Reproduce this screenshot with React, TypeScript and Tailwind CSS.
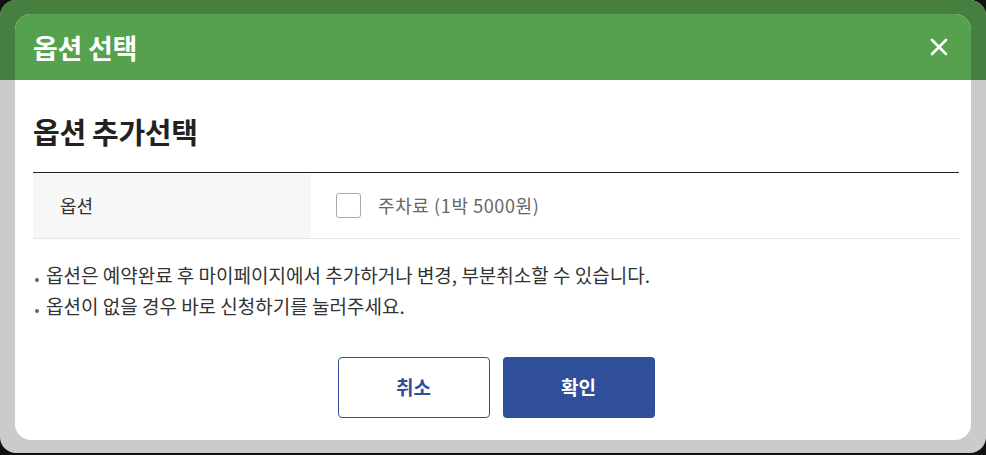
import { useState } from "react";

const notes = [
  "옵션은 예약완료 후 마이페이지에서 추가하거나 변경, 부분취소할 수 있습니다.",
  "옵션이 없을 경우 바로 신청하기를 눌러주세요.",
];

export default function App() {
  const [parking, setParking] = useState(false);

  return (
    <div
      className="w-[986px] h-[455px] bg-[#111] overflow-hidden"
      style={{ fontFamily: '"Noto Sans CJK KR", "Noto Sans", sans-serif' }}
    >
      {/* dimmed page behind the dialog */}
      <div className="relative w-full h-[453px] rounded-[16px] bg-[#cbcbcb] overflow-hidden">
        <div className="h-[80px] bg-[#467f40]" />

        {/* dialog */}
        <div className="absolute left-[15px] top-[14px] w-[956px] h-[426px] rounded-[16px] bg-white overflow-hidden flex flex-col">
          <div className="h-[66px] bg-[#55a14e] flex items-center justify-between pl-[18px] pr-[20px]">
            <h2 className="text-[27px] font-bold text-white leading-none tracking-[-0.3px]">옵션 선택</h2>
            <button className="w-[24px] h-[24px] flex items-center justify-center">
              <svg width="18" height="18" viewBox="0 0 18 18" stroke="white" strokeWidth="2.6" strokeLinecap="round">
                <path d="M2 2 L16 16 M16 2 L2 16" />
              </svg>
            </button>
          </div>

          <div className="pl-[18px] pr-[12px] pt-[34px]">
            <h3 className="text-[29px] font-bold text-[#222] leading-[34px] tracking-[-0.3px]">옵션 추가선택</h3>

            <div className="mt-[24px] border-t border-[#222] border-b border-b-[#e6e6e6] flex h-[67px]">
              <div className="w-[278px] bg-[#f7f7f7] flex items-center pl-[27px] text-[18px] text-[#333]">옵션</div>
              <label className="flex items-center pl-[25px] gap-[17px] cursor-pointer">
                <input
                  type="checkbox"
                  checked={parking}
                  onChange={(e) => setParking(e.target.checked)}
                  className="appearance-none w-[25px] h-[25px] border border-[#aaa] rounded-[3px] bg-white checked:bg-[#2f4f9b]"
                />
                <span className="text-[18px] text-[#666] tracking-[0.6px]">주차료 (1박 5000원)</span>
              </label>
            </div>

            <ul className="mt-[24px] flex flex-col gap-[7px]">
              {notes.map((n) => (
                <li key={n} className="flex items-center text-[19px] text-[#333] leading-[24px]">
                  <span className="w-[4px] h-[4px] rounded-full bg-[#666] mt-[10px] ml-[2px] mr-[7px] shrink-0" />
                  {n}
                </li>
              ))}
            </ul>

            <div className="mt-[39px] flex justify-center gap-[13px]">
              <button className="w-[152px] h-[61px] rounded-[4px] border border-[#2f4f9b] bg-white text-[#2f4f9b] text-[19px] font-bold">
                취소
              </button>
              <button className="w-[152px] h-[61px] rounded-[4px] bg-[#2f4f9b] text-white text-[19px] font-bold">
                확인
              </button>
            </div>
          </div>
        </div>
      </div>
    </div>
  );
}
